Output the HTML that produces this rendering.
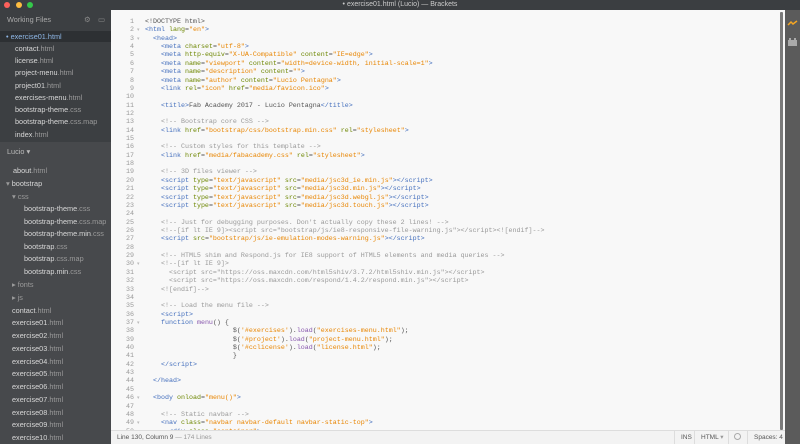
<!DOCTYPE html>
<html><head><style>
*{margin:0;padding:0;box-sizing:border-box}
body{width:800px;height:444px;overflow:hidden;background:#47494c;font-family:"Liberation Sans",sans-serif;position:relative}
#title{position:absolute;left:0;top:0;width:800px;height:10px;background:#3b3e41;color:#ccc;font-size:7px;line-height:10px;text-align:center}
.dot{position:absolute;top:2px;width:6px;height:6px;border-radius:50%}
#wf{position:absolute;left:0;top:10px;width:111px;height:132px;background:#3c3f42}
#tree{position:absolute;left:0;top:142px;width:111px;height:302px;background:#47494c}
.it{position:absolute;font-size:7.3px;color:#d8d8d8;white-space:nowrap}
.it i{font-style:normal;color:#9a9a9a}
#ed{position:absolute;left:111px;top:10px;width:674px;height:420px;background:#f8f8f8}
pre{position:absolute;left:0;top:8px;font-family:"Liberation Mono",monospace;font-size:6.67px;line-height:8.36px;color:#535353}
.ln{position:absolute;left:0;top:8px;width:23px;text-align:right;font-family:"Liberation Mono",monospace;font-size:6.67px;line-height:8.36px;color:#999}
.fa{position:absolute;left:26px;font-size:5px;color:#bbb;line-height:8.36px}
.t{color:#446fbd}.a{color:#6d8600}.s{color:#e88501}.c{color:#999}.p{color:#8757ad}
#sb{position:absolute;left:111px;top:430px;width:674px;height:14px;background:#f3f3f3;border-top:1px solid #ddd;font-size:6.5px;color:#555;line-height:13px}
#rt{position:absolute;left:785px;top:10px;width:15px;height:434px;background:#5b5b5b}
</style></head><body>
<div id="title">• exercise01.html (Lucio) — Brackets</div>
<div class="dot" style="left:4px;background:#fc605b"></div>
<div class="dot" style="left:16px;background:#fdbc40"></div>
<div class="dot" style="left:27px;background:#34c84a"></div>
<div id="wf">
<div class="it" style="left:7px;top:5px;color:#aaa">Working Files</div>
<div class="it" style="left:84px;top:5px;color:#888">⚙</div>
<div class="it" style="left:98px;top:5px;color:#888">▭</div>
<div style="position:absolute;left:0;top:21px;width:111px;height:11px;background:#2d3033"></div>
<div class="it" style="left:6px;top:22px;color:#8fb8e8">• exercise01.html</div>
<div class="it" style="left:15px;top:34px">contact<i>.html</i></div>
<div class="it" style="left:15px;top:46px">license<i>.html</i></div>
<div class="it" style="left:15px;top:58px">project-menu<i>.html</i></div>
<div class="it" style="left:15px;top:71px">project01<i>.html</i></div>
<div class="it" style="left:15px;top:83px">exercises-menu<i>.html</i></div>
<div class="it" style="left:15px;top:95px">bootstrap-theme<i>.css</i></div>
<div class="it" style="left:15px;top:107px">bootstrap-theme<i>.css.map</i></div>
<div class="it" style="left:15px;top:120px">index<i>.html</i></div>
</div>
<div id="tree">
<div class="it" style="left:7px;top:5px;color:#bbb">Lucio ▾</div>
<div class="it" style="left:13px;top:24px">about<i>.html</i></div>
<div class="it" style="left:6px;top:37px"><i>▾</i> bootstrap</div>
<div class="it" style="left:12px;top:50px"><i>▾ css</i></div>
<div class="it" style="left:24px;top:62px">bootstrap-theme<i>.css</i></div>
<div class="it" style="left:24px;top:75px">bootstrap-theme<i>.css.map</i></div>
<div class="it" style="left:24px;top:87px">bootstrap-theme.min<i>.css</i></div>
<div class="it" style="left:24px;top:100px">bootstrap<i>.css</i></div>
<div class="it" style="left:24px;top:112px">bootstrap<i>.css.map</i></div>
<div class="it" style="left:24px;top:125px">bootstrap.min<i>.css</i></div>
<div class="it" style="left:12px;top:138px"><i>▸ fonts</i></div>
<div class="it" style="left:12px;top:151px"><i>▸ js</i></div>
<div class="it" style="left:12px;top:164px">contact<i>.html</i></div>
<div class="it" style="left:12px;top:176px">exercise01<i>.html</i></div>
<div class="it" style="left:12px;top:189px">exercise02<i>.html</i></div>
<div class="it" style="left:12px;top:202px">exercise03<i>.html</i></div>
<div class="it" style="left:12px;top:215px">exercise04<i>.html</i></div>
<div class="it" style="left:12px;top:227px">exercise05<i>.html</i></div>
<div class="it" style="left:12px;top:240px">exercise06<i>.html</i></div>
<div class="it" style="left:12px;top:253px">exercise07<i>.html</i></div>
<div class="it" style="left:12px;top:266px">exercise08<i>.html</i></div>
<div class="it" style="left:12px;top:278px">exercise09<i>.html</i></div>
<div class="it" style="left:12px;top:291px">exercise10<i>.html</i></div>
</div>
<div id="ed">
<div class="ln">1<br>2<br>3<br>4<br>5<br>6<br>7<br>8<br>9<br>10<br>11<br>12<br>13<br>14<br>15<br>16<br>17<br>18<br>19<br>20<br>21<br>22<br>23<br>24<br>25<br>26<br>27<br>28<br>29<br>30<br>31<br>32<br>33<br>34<br>35<br>36<br>37<br>38<br>39<br>40<br>41<br>42<br>43<br>44<br>45<br>46<br>47<br>48<br>49<br>50</div>
<div class="fa" style="top:16.4px">▾</div>
<div class="fa" style="top:24.7px">▾</div>
<div class="fa" style="top:250.4px">▾</div>
<div class="fa" style="top:309px">▾</div>
<div class="fa" style="top:384.2px">▾</div>
<div class="fa" style="top:409.3px">▾</div>
<pre style="left:34px">&lt;!DOCTYPE html&gt;
<span class="t">&lt;html</span> <span class="a">lang</span>=<span class="s">"en"</span><span class="t">&gt;</span>
  <span class="t">&lt;head&gt;</span>
    <span class="t">&lt;meta</span> <span class="a">charset</span>=<span class="s">"utf-8"</span><span class="t">&gt;</span>
    <span class="t">&lt;meta</span> <span class="a">http-equiv</span>=<span class="s">"X-UA-Compatible"</span> <span class="a">content</span>=<span class="s">"IE=edge"</span><span class="t">&gt;</span>
    <span class="t">&lt;meta</span> <span class="a">name</span>=<span class="s">"viewport"</span> <span class="a">content</span>=<span class="s">"width=device-width, initial-scale=1"</span><span class="t">&gt;</span>
    <span class="t">&lt;meta</span> <span class="a">name</span>=<span class="s">"description"</span> <span class="a">content</span>=<span class="s">""</span><span class="t">&gt;</span>
    <span class="t">&lt;meta</span> <span class="a">name</span>=<span class="s">"author"</span> <span class="a">content</span>=<span class="s">"Lucio Pentagna"</span><span class="t">&gt;</span>
    <span class="t">&lt;link</span> <span class="a">rel</span>=<span class="s">"icon"</span> <span class="a">href</span>=<span class="s">"media/favicon.ico"</span><span class="t">&gt;</span>

    <span class="t">&lt;title&gt;</span>Fab Academy 2017 - Lucio Pentagna<span class="t">&lt;/title&gt;</span>

    <span class="c">&lt;!-- Bootstrap core CSS --&gt;</span>
    <span class="t">&lt;link</span> <span class="a">href</span>=<span class="s">"bootstrap/css/bootstrap.min.css"</span> <span class="a">rel</span>=<span class="s">"stylesheet"</span><span class="t">&gt;</span>

    <span class="c">&lt;!-- Custom styles for this template --&gt;</span>
    <span class="t">&lt;link</span> <span class="a">href</span>=<span class="s">"media/fabacademy.css"</span> <span class="a">rel</span>=<span class="s">"stylesheet"</span><span class="t">&gt;</span>

    <span class="c">&lt;!-- 3D files viewer --&gt;</span>
    <span class="t">&lt;script</span> <span class="a">type</span>=<span class="s">"text/javascript"</span> <span class="a">src</span>=<span class="s">"media/jsc3d_ie.min.js"</span><span class="t">&gt;&lt;/script&gt;</span>
    <span class="t">&lt;script</span> <span class="a">type</span>=<span class="s">"text/javascript"</span> <span class="a">src</span>=<span class="s">"media/jsc3d.min.js"</span><span class="t">&gt;&lt;/script&gt;</span>
    <span class="t">&lt;script</span> <span class="a">type</span>=<span class="s">"text/javascript"</span> <span class="a">src</span>=<span class="s">"media/jsc3d.webgl.js"</span><span class="t">&gt;&lt;/script&gt;</span>
    <span class="t">&lt;script</span> <span class="a">type</span>=<span class="s">"text/javascript"</span> <span class="a">src</span>=<span class="s">"media/jsc3d.touch.js"</span><span class="t">&gt;&lt;/script&gt;</span>

    <span class="c">&lt;!-- Just for debugging purposes. Don't actually copy these 2 lines! --&gt;</span>
    <span class="c">&lt;!--[if lt IE 9]&gt;&lt;script src="bootstrap/js/ie8-responsive-file-warning.js"&gt;&lt;/script&gt;&lt;![endif]--&gt;</span>
    <span class="t">&lt;script</span> <span class="a">src</span>=<span class="s">"bootstrap/js/ie-emulation-modes-warning.js"</span><span class="t">&gt;&lt;/script&gt;</span>

    <span class="c">&lt;!-- HTML5 shim and Respond.js for IE8 support of HTML5 elements and media queries --&gt;</span>
    <span class="c">&lt;!--[if lt IE 9]&gt;</span>
<span class="c">      &lt;script src="https://oss.maxcdn.com/html5shiv/3.7.2/html5shiv.min.js"&gt;&lt;/script&gt;</span>
<span class="c">      &lt;script src="https://oss.maxcdn.com/respond/1.4.2/respond.min.js"&gt;&lt;/script&gt;</span>
<span class="c">    &lt;![endif]--&gt;</span>

    <span class="c">&lt;!-- Load the menu file --&gt;</span>
    <span class="t">&lt;script&gt;</span>
    <span class="t">function</span> <span class="p">menu</span>() {
                      $(<span class="s">'#exercises'</span>).<span class="p">load</span>(<span class="s">"exercises-menu.html"</span>);
                      $(<span class="s">'#project'</span>).<span class="p">load</span>(<span class="s">"project-menu.html"</span>);
                      $(<span class="s">'#cclicense'</span>).<span class="p">load</span>(<span class="s">"license.html"</span>);
                      }
    <span class="t">&lt;/script&gt;</span>

  <span class="t">&lt;/head&gt;</span>

  <span class="t">&lt;body</span> <span class="a">onload</span>=<span class="s">"menu()"</span><span class="t">&gt;</span>

    <span class="c">&lt;!-- Static navbar --&gt;</span>
    <span class="t">&lt;nav</span> <span class="a">class</span>=<span class="s">"navbar navbar-default navbar-static-top"</span><span class="t">&gt;</span>
      <span class="t">&lt;div</span> <span class="a">class</span>=<span class="s">"container"</span><span class="t">&gt;</span></pre>
<div style="position:absolute;left:669px;top:2px;width:3px;height:418px;background:#7a7a7a;border-radius:1px"></div>
</div>
<div id="sb"><span style="position:absolute;left:6px">Line 130, Column 9 <span style="color:#999">— 174 Lines</span></span>
<span style="position:absolute;left:563px;height:13px;border-left:1px solid #ddd;padding-left:6px">INS</span>
<span style="position:absolute;left:583px;height:13px;border-left:1px solid #ddd;padding-left:6px">HTML <span style="color:#999">▾</span></span>
<span style="position:absolute;left:617px;height:13px;border-left:1px solid #ddd;padding-left:5px;top:0"><span style="display:inline-block;width:7px;height:7px;border:1px solid #aaa;border-radius:50%;vertical-align:-1px"></span></span>
<span style="position:absolute;left:636px;height:13px;border-left:1px solid #ddd;padding-left:6px">Spaces: 4</span></div>
<div id="rt">
<svg width="15" height="40" style="position:absolute;left:0;top:10px"><path d="M3 5 L6 2 L8 4 L12 1" stroke="#f5a623" stroke-width="1.5" fill="none"/><rect x="3" y="20" width="9" height="6" fill="#aaa"/><rect x="4" y="18" width="2" height="2" fill="#aaa"/><rect x="9" y="18" width="2" height="2" fill="#aaa"/></svg>
</div>
</body></html>
